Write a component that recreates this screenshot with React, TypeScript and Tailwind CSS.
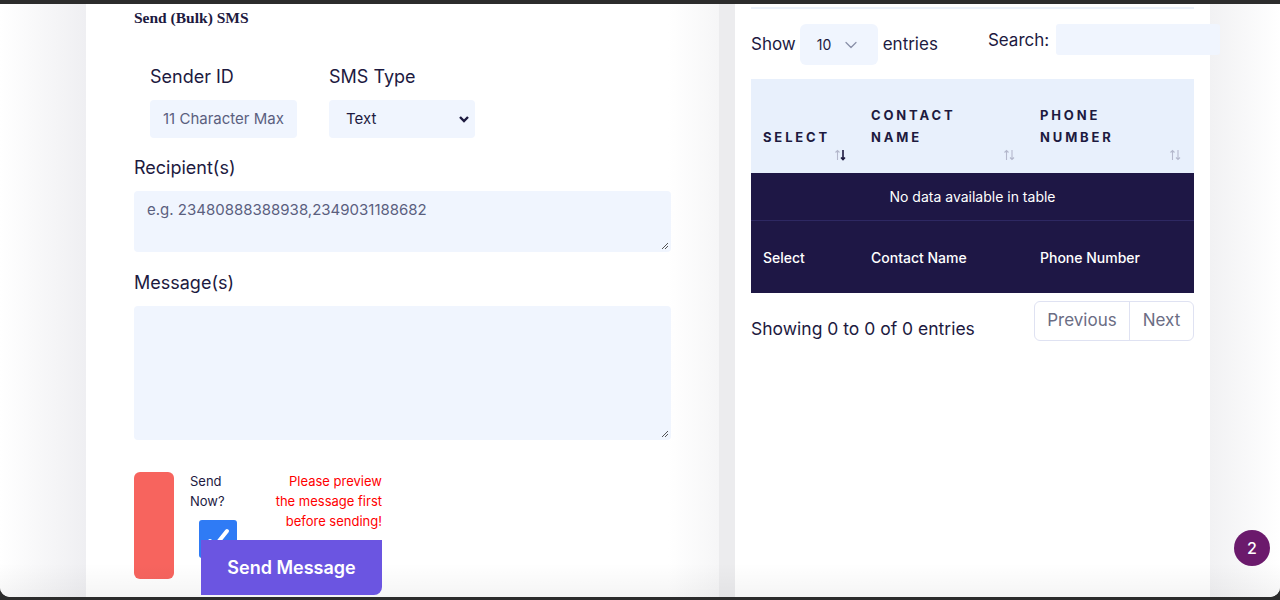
import React from "react";
import { ChevronDown } from "lucide-react";

const FONT = { fontFamily: "Inter, 'Noto Sans', sans-serif" };

const SortIcon = ({ active = false }: { active?: boolean }) => (
  <svg width="13" height="12" viewBox="0 0 13 12" className="shrink-0">
    <path d="M3.5 11V1.5M1.5 3.5l2-2 2 2" stroke="#b4b8cc" strokeWidth="1.1" fill="none" />
    <path
      d="M9 1v9.5M7 8.5l2 2 2-2"
      stroke={active ? "#1d1a3f" : "#b4b8cc"}
      strokeWidth={active ? 1.6 : 1.1}
      fill="none"
    />
  </svg>
);

const Label = ({ children }: { children: React.ReactNode }) => (
  <div className="text-[18px] leading-[24px] text-[#1d1a3f]">{children}</div>
);

const SendForm = () => (
  <div className="w-[633px] shrink-0 bg-gradient-to-r from-white from-[92%] to-[#f6f6f7] pl-[48px]">
    <h2
      className="mt-[4px] text-[15.5px] font-bold leading-[20px] text-[#1d1a3f]"
      style={{ fontFamily: "'Liberation Serif', 'DejaVu Serif', serif" }}
    >
      Send (Bulk) SMS
    </h2>

    {/* sender + type */}
    <div className="mt-[37px] flex gap-[32px] pl-[16px]">
      <div className="w-[147px]">
        <Label>Sender ID</Label>
        <div className="mt-[11px] flex h-[38px] items-center rounded-[4px] bg-[#f0f5fe] px-[13px] text-[15px] text-[#5b5f7e]">
          11 Character Max
        </div>
      </div>
      <div className="w-[146px]">
        <Label>SMS Type</Label>
        <div className="mt-[11px] flex h-[38px] items-center justify-between rounded-[4px] bg-[#f0f5fe] pl-[17px] pr-[5px] text-[15px] text-[#1d1a3f]">
          <span>Text</span>
          <svg width="12" height="8" viewBox="0 0 12 8">
            <path d="M2 2l4 4 4-4" stroke="#1d1a3f" strokeWidth="2.4" fill="none" />
          </svg>
        </div>
      </div>
    </div>

    <div className="mt-[18px]">
      <Label>Recipient(s)</Label>
    </div>
    <div className="relative mt-[11px] h-[61px] w-[537px] rounded-[4px] bg-[#f0f5fe] px-[13px] pt-[8px] text-[15px] text-[#5b5f7e]">
      e.g. 23480888388938,2349031188682
      <svg width="8" height="8" viewBox="0 0 8 8" className="absolute bottom-[2px] right-[2px]">
        <path d="M1 7L7 1M4 7L7 4" stroke="#555" strokeWidth="1" />
      </svg>
    </div>

    <div className="mt-[19px]">
      <Label>Message(s)</Label>
    </div>
    <div className="relative mt-[11px] h-[134px] w-[537px] rounded-[4px] bg-[#f0f5fe]">
      <svg width="8" height="8" viewBox="0 0 8 8" className="absolute bottom-[2px] right-[2px]">
        <path d="M1 7L7 1M4 7L7 4" stroke="#555" strokeWidth="1" />
      </svg>
    </div>

    {/* actions */}
    <div className="mt-[32px] flex gap-[16px]">
      <div className="h-[107px] w-[40px] rounded-[6px] bg-[#f7645e]" />
      <div className="relative -mt-[1px] w-[192px]">
        <div className="flex justify-between text-[13px] leading-[20px]">
          <div className="text-[#1d1a3f]">
            Send
            <br />
            Now?
          </div>
          <div className="text-right text-[#ff0000]">
            Please preview
            <br />
            the message first
            <br />
            before sending!
          </div>
        </div>
        <div className="absolute left-[9px] top-[49px] flex h-[38px] w-[38px] items-center justify-center rounded-[3px] bg-[#2f7bf5]">
          <svg width="26" height="26" viewBox="0 0 26 26">
            <path d="M5 15l5 5L22 5" stroke="white" strokeWidth="4" fill="none" strokeLinecap="round" />
          </svg>
        </div>
        <button className="absolute left-[11px] top-[69px] z-10 flex h-[55px] w-[181px] items-center justify-center rounded-br-[8px] bg-[#6b55e1] text-[18px] font-semibold text-white">
          Send Message
        </button>
      </div>
    </div>
  </div>
);

const ContactsTable = () => (
  <div className="w-[475px] shrink-0 bg-white px-[16px]">
    <div className="mt-[3px] h-[2px] bg-[#eaf0f9]" />

    {/* controls */}
    <div className="mt-[15px] flex items-start text-[17px] text-[#1d1a3f]">
      <span className="mt-[8px]">Show</span>
      <div className="ml-[4px] flex h-[41px] w-[78px] items-center gap-[10px] rounded-[6px] bg-[#f0f5fe] pl-[17px] text-[14px]">
        10
        <ChevronDown size={20} strokeWidth={1.5} className="text-[#8a90a8]" />
      </div>
      <span className="ml-[5px] mt-[8px]">entries</span>
      <span className="ml-[50px] mt-[4px]">Search:</span>
      <div className="relative z-10 ml-[7px] -mr-[26px] h-[31px] w-[164px] rounded-[3px] bg-[#f0f5fe]" />
    </div>

    {/* table */}
    <div className="mt-[14px] w-[443px]">
      <div className="grid h-[94px] grid-cols-[108px_169px_166px] bg-[#e8f0fc] text-[13px] font-bold uppercase leading-[22px] tracking-[0.22em] text-[#1d1a3f]">
        <div className="flex items-end justify-between pb-[25px] pl-[12px] pr-[12px]">
          <span>Select</span>
          <span className="-mb-[13px]">
            <SortIcon active />
          </span>
        </div>
        <div className="flex items-end justify-between pb-[25px] pl-[12px] pr-[12px]">
          <span>
            Contact
            <br />
            Name
          </span>
          <span className="-mb-[13px]">
            <SortIcon />
          </span>
        </div>
        <div className="flex items-end justify-between pb-[25px] pl-[12px] pr-[12px]">
          <span>
            Phone
            <br />
            Number
          </span>
          <span className="-mb-[13px]">
            <SortIcon />
          </span>
        </div>
      </div>
      <div className="flex h-[48px] items-center justify-center border-b border-[#2e2862] bg-[#1e1745] text-[14px] text-white">
        No data available in table
      </div>
      <div className="grid h-[72px] grid-cols-[108px_169px_166px] items-center bg-[#1e1745] text-[14px] font-medium text-white">
        <div className="pl-[12px]">Select</div>
        <div className="pl-[12px]">Contact Name</div>
        <div className="pl-[12px]">Phone Number</div>
      </div>
    </div>

    {/* footer */}
    <div className="mt-[8px] flex w-[443px] items-start justify-between text-[17px]">
      <span className="mt-[15px] text-[17.5px] text-[#1d1a3f]">Showing 0 to 0 of 0 entries</span>
      <div className="flex h-[40px] overflow-hidden rounded-[6px] border border-[#dfe2f2] text-[#6b6d84]">
        <div className="flex w-[95px] items-center justify-center border-r border-[#dfe2f2]">Previous</div>
        <div className="flex w-[63px] items-center justify-center">Next</div>
      </div>
    </div>
  </div>
);

export default function App() {
  return (
    <div className="h-[600px] w-[1280px] overflow-hidden bg-[#2c2c2c] pt-[4px]" style={FONT}>
      <div className="relative flex h-[593px] overflow-hidden rounded-b-[10px] bg-white">
        <div className="w-[86px] shrink-0 bg-gradient-to-r from-white to-[#efeff2]" />
        <SendForm />
        <div className="w-[16px] shrink-0 bg-[#ececee]" />
        <ContactsTable />
        <div className="flex-1 bg-gradient-to-r from-[#f1f1f3] to-white" />

        <div className="pointer-events-none absolute bottom-0 left-0 right-0 h-[34px] bg-gradient-to-b from-transparent to-[#000000]/[0.04]" />

        <div className="absolute left-[1234px] top-[526px] z-20 flex h-[36px] w-[36px] items-center justify-center rounded-full bg-[#6b1a6c] text-[16px] font-medium text-white">
          2
        </div>
      </div>
    </div>
  );
}
